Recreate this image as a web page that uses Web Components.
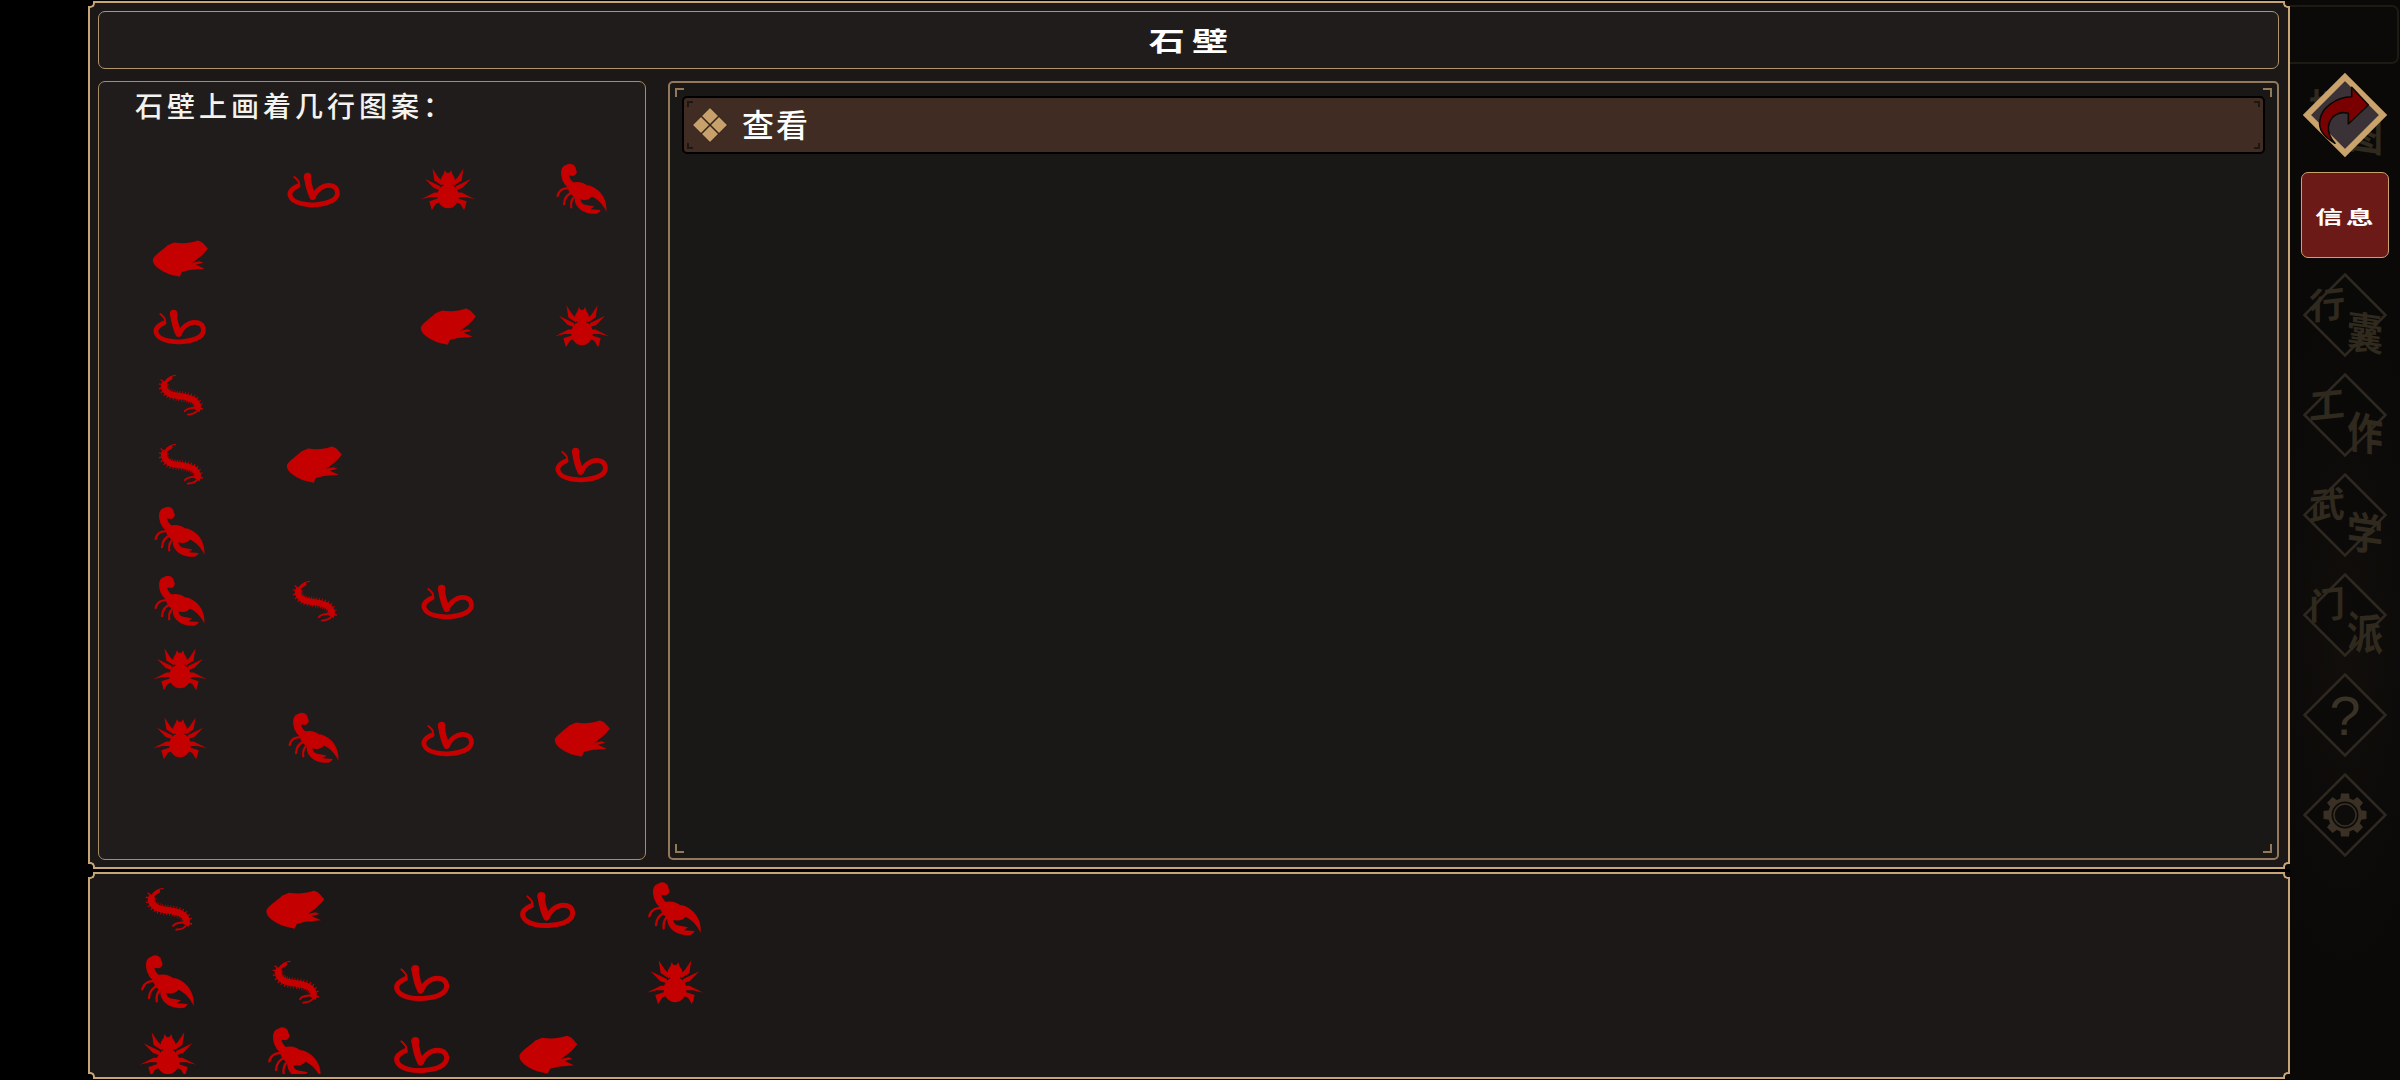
<!DOCTYPE html>
<html lang="zh">
<head>
<meta charset="utf-8">
<title>石壁</title>
<style>
html,body{margin:0;padding:0;background:#000;width:2400px;height:1080px;overflow:hidden}
body{font-family:"Noto Sans CJK SC","Noto Sans",sans-serif;color:#fff}
</style>
</head>
<body>
<stone-app>
  <game-frame style="height:868px;margin-top:1px">
    <title-bar>石壁</title-bar>
    <div style="display:flex;gap:22px;flex:1;min-height:0">
      <mural-panel>
        <span slot="caption">石壁上画着几行图案：</span>
        <glyph-grid cols="4" cell="134" row="68.6" size="76" items="- snake spider scorpion frog - - - snake - frog spider centipede - - - centipede frog - snake scorpion - - - scorpion centipede snake - spider - - - spider scorpion snake frog"></glyph-grid>
      </mural-panel>
      <action-panel>
        <action-row>查看</action-row>
      </action-panel>
    </div>
  </game-frame>
  <game-frame slot="lower" tight style="height:207px;margin-top:3px">
    <glyph-grid style="margin-top:-1px" cols="5" cell="126.7" row="72.5" size="80" items="centipede frog - snake scorpion scorpion centipede snake - spider spider scorpion snake frog -"></glyph-grid>
  </game-frame>
  <side-bar slot="side">
    <side-slot a="地" b="图" kind="back"></side-slot>
    <info-tile>信息</info-tile>
    <side-slot a="行" b="囊"></side-slot>
    <side-slot a="工" b="作"></side-slot>
    <side-slot a="武" b="学"></side-slot>
    <side-slot a="门" b="派"></side-slot>
    <side-slot kind="help"></side-slot>
    <side-slot kind="gear"></side-slot>
  </side-bar>
</stone-app>
<script>
function def(name, html){
  const C = class extends HTMLElement{
    constructor(){super();this.attachShadow({mode:'open'}).innerHTML = typeof html==='function'?html(this):html;}
  };
  customElements.define(name,C);
}
const TAN='#c6a676';

def('stone-app',`<style>
:host{display:flex;width:2400px;height:1080px;background:#000}
.l{width:88px;flex:none;background:#000}
.m{width:2202px;flex:none;display:flex;flex-direction:column}
.s{flex:1;min-width:0}
</style>
<div class="l"></div>
<div class="m"><slot></slot><slot name="lower"></slot></div>
<div class="s"><slot name="side"></slot></div>`);

def('game-frame',`<style>
:host{display:flex;flex-direction:column;box-sizing:border-box;border:2px solid ${TAN};background:#1b1817;padding:8px 9px 7px 8px;gap:12px;position:relative}
:host([tight]){padding:0 0 3px 15px;background:#1b1817}
i{position:absolute;width:7px;height:7px;background:#0a0908;box-sizing:border-box;border:0 solid ${TAN}}
.tl{left:-2px;top:-2px;border-width:0 2px 2px 0;border-bottom-right-radius:5px;background:#000}
.tr{right:-2px;top:-2px;border-width:0 0 2px 2px;border-bottom-left-radius:5px}
.bl{left:-2px;bottom:-2px;border-width:2px 2px 0 0;border-top-right-radius:5px;background:#000}
.br{right:-2px;bottom:-2px;border-width:2px 0 0 2px;border-top-left-radius:5px}
</style><slot></slot><i class="tl"></i><i class="tr"></i><i class="bl"></i><i class="br"></i>`);

def('title-bar',`<style>
:host{display:flex;align-items:center;justify-content:center;flex:none;box-sizing:border-box;height:58px;border:1.5px solid #b0946a;border-radius:7px;background:#1f1c1b;font:700 30px "Noto Sans CJK SC",sans-serif;color:#fff}
span{display:inline-block;letter-spacing:6px;margin-right:-6px;transform:scale(1.2,.88)}
</style><span><slot></slot></span>`);

def('mural-panel',`<style>
:host{display:block;box-sizing:border-box;width:548px;flex:none;border:1.5px solid #a88c62;border-radius:7px;background:#1f1c1b;padding:4px 0 0 14px;overflow:hidden}
.c{height:38px;margin:0 0 31px 22px;font:500 28px/38px "Noto Sans CJK SC",sans-serif;letter-spacing:4px;color:#f4f2ee}
</style><div class="c"><slot name="caption"></slot></div><slot></slot>`);

def('action-panel',`<style>
:host{display:block;box-sizing:border-box;flex:1;min-width:0;border:2px solid #93785a;border-radius:5px;background:#1a1817;padding:13px 12px;position:relative}
i{position:absolute;width:9px;height:9px;box-sizing:border-box;border:0 solid #93785a}
.a{left:5px;top:5px;border-width:2px 0 0 2px}.b{right:5px;top:5px;border-width:2px 2px 0 0}
.c{left:5px;bottom:5px;border-width:0 0 2px 2px}.d{right:5px;bottom:5px;border-width:0 2px 2px 0}
</style><slot></slot><i class="a"></i><i class="b"></i><i class="c"></i><i class="d"></i>`);

def('action-row',`<style>
:host{display:flex;align-items:center;box-sizing:border-box;height:58px;border:2px solid #000;border-radius:5px;background:#402c22;padding-left:8px;gap:14px;position:relative;font:500 32px "Noto Sans CJK SC",sans-serif;letter-spacing:2px;color:#fff}
svg{flex:none;display:block}
span{position:relative;top:-2px}
i{position:absolute;width:6px;height:6px;box-sizing:border-box;border:0 solid #1e1611}
.a{left:3px;top:3px;border-width:2px 0 0 2px}.b{right:3px;top:3px;border-width:2px 2px 0 0}
.c{left:3px;bottom:3px;border-width:0 0 2px 2px}.d{right:3px;bottom:3px;border-width:0 2px 2px 0}
</style>
<svg width="36" height="36" viewBox="-18 -18 36 36"><g fill="#c8a06c" stroke="#120d0a" stroke-width=".8"><path d="M0 -17.5L8.5 -9L0 -.5L-8.5 -9Z"/><path d="M0 17.5L8.5 9L0 .5L-8.5 9Z"/><path d="M-17.5 0L-9 -8.5L-.5 0L-9 8.5Z"/><path d="M17.5 0L9 -8.5L.5 0L9 8.5Z"/></g></svg>
<span><slot></slot></span><i class="a"></i><i class="b"></i><i class="c"></i><i class="d"></i>`);

const R='#c40000';
const SHAPES={
 snake:`<g transform="translate(-116 -100)" fill="none" stroke="${R}" stroke-linecap="round"><path stroke-width="6" d="M54 62C64 72 74 78 66 90"/><path stroke-width="15" d="M66 90C48 98 36 108 41 122C50 147 95 152 125 149C165 146 192 132 190 110C188 90 165 84 146 92C132 98 124 106 118 118"/><path stroke-width="21" d="M95 64C98 84 102 105 112 124"/><circle cx="96" cy="61" r="12" fill="${R}" stroke="none"/></g>`,
 spider:`<g fill="${R}"><g transform="translate(-105 -95)"><ellipse cx="105" cy="118" rx="34" ry="38"/><circle cx="105" cy="66" r="22"/><path d="M88 58L95 36L105 50L115 36L122 58Z"/><path d="M56 30L76 60L92 74L86 84L62 68Z"/><path d="M32 63L80 86L84 100L60 92Z"/><path d="M20 127L62 106L82 106L78 120L50 120Z"/><path d="M54 162L46 134L76 124L84 134L66 142Z"/><path d="M154 30L134 60L118 74L124 84L148 68Z"/><path d="M178 63L130 86L126 100L150 92Z"/><path d="M190 127L148 106L128 106L132 120L160 120Z"/><path d="M156 162L164 134L134 124L126 134L144 142Z"/></g></g>`,
 scorpion:`<g transform="translate(-499 -102)" fill="none" stroke="${R}" stroke-linecap="round"><path stroke-width="24" d="M470 48C455 32 443 34 445 56C447 74 458 88 474 98"/><circle cx="461" cy="41" r="19" fill="${R}" stroke="none"/><ellipse cx="494" cy="108" rx="40" ry="26" transform="rotate(22 494 108)" fill="${R}" stroke="none"/><path fill="${R}" stroke="none" d="M518 90C552 98 580 130 576 174C566 152 548 128 510 118Z"/><path fill="${R}" stroke="none" d="M476 126C472 160 505 184 545 180C551 178 557 172 558 168L526 166L538 157L506 151C496 147 494 138 492 126Z"/><path stroke-width="7" d="M466 100C442 96 426 106 422 124M470 112C452 118 443 134 442 150M482 120C467 130 463 145 465 160M495 125C488 134 486 142 487 150"/></g>`,
 frog:`<g transform="translate(-484 -85)"><path fill="${R}" d="M398 90C403 75 430 60 445 45L466 36C490 40 515 39 540 30C556 33 561 44 572 55C561 71 546 85 522 100L546 95L558 100L534 106L562 119L515 123L490 129L483 144L449 136C424 126 398 111 398 90Z"/></g>`,
 centipede:`<g transform="translate(-97 -85)" fill="none" stroke="${R}" stroke-linecap="round"><path stroke-width="4" d="M82 23C68 25 60 31 55 38"/><path stroke-width="11" d="M68 32C54 38 47 50 49 60"/><path stroke-width="32" stroke-dasharray="2.5 6" stroke-linecap="butt" d="M50 44C40 58 48 72 62 80C82 92 125 86 145 105C154 116 156 124 152 130"/><path stroke-width="20" stroke-linecap="butt" d="M50 46C42 58 48 72 62 80C82 92 125 86 145 105C154 116 156 124 150 134"/><path stroke-width="6" d="M150 126C135 124 118 128 112 136M150 136C142 146 132 146 122 147"/></g>`
};
def('rock-glyph',el=>{
  const t=el.getAttribute('type'),s=+el.getAttribute('size')||80;
  return `<style>:host{display:block;width:${s}px;height:${s}px}svg{display:block;overflow:visible}</style><svg width="${s}" height="${s}" viewBox="-120 -120 240 240">${SHAPES[t]||''}</svg>`;
});

def('glyph-grid',el=>{
  const c=el.getAttribute('cols'),w=el.getAttribute('cell'),r=el.getAttribute('row'),s=el.getAttribute('size');
  const cells=el.getAttribute('items').split(/\s+/).map(t=>`<div>${t==='-'?'':`<rock-glyph type="${t}" size="${s}"></rock-glyph>`}</div>`).join('');
  return `<style>:host{display:grid;grid-template-columns:repeat(${c},${w}px);grid-auto-rows:${r}px;overflow:hidden;flex:1;min-height:0}
  div{display:flex;align-items:center;justify-content:center;min-width:0;min-height:0}</style>${cells}`;
});

def('side-bar',`<style>
:host{display:flex;flex-direction:column;height:1080px;background:radial-gradient(ellipse 120px 420px at 50% 640px,#110e0b,#0a0908 80%);box-sizing:border-box;padding-top:5px}
.top{height:59px;flex:none;box-sizing:border-box;border:2px solid #1e1a14;border-left:0;border-radius:0 7px 7px 0;background:#0b0a09;margin:0 1px 1px 0}
</style><div class="top"></div><slot></slot>`);

def('info-tile',`<style>
:host{display:flex;align-items:center;justify-content:center;box-sizing:border-box;width:88px;height:86px;margin:7px 0 7px 11px;flex:none;background:#6b1a17;border:1.5px solid #c9a26c;border-radius:7px;font:700 26px "Noto Sans CJK SC",sans-serif;color:#fff}
span{display:inline-block;letter-spacing:3px;margin-right:-3px;transform:scale(1.06,.72)}
</style><span><slot></slot></span>`);

def('side-slot',el=>{
  const k=el.getAttribute('kind')||'',a=el.getAttribute('a')||'',b=el.getAttribute('b')||'';
  const back=k==='back';
  const dia=back
   ?`<polygon points="55,17 93,55 55,93 17,55" fill="#3a3236" stroke="#c9a26c" stroke-width="6"/>`
   :`<polygon points="55,14.5 95.5,55 55,95.5 14.5,55" fill="#0a0908" fill-opacity=".55" stroke="#2e2820" stroke-width="2.5"/>`;
  const arrow=back?`<svg class="ov" width="110" height="100" viewBox="0 0 110 100"><path d="M61.7 22.3L78.3 40L58.3 59L58.3 48.3C50 46 40 50 38.3 62C38 68 41 74 45 78.3C34 72 28 64 30 55C31 44 45 32 61.7 31.7Z" fill="#7a0000" stroke="#0c0808" stroke-width="1.6" stroke-linejoin="round"/></svg>`:'';
  let gear='';
  if(k==='gear'){
    let teeth='';for(let i=0;i<8;i++)teeth+=`<path d="M49.5 40L51 28.5H59L60.5 40Z" fill="#3a3024" transform="rotate(${i*45} 55 50)"/>`;
    gear=`<svg class="ov" width="110" height="100" viewBox="0 0 110 100">${teeth}<circle cx="55" cy="50" r="17" fill="#3a3024"/><circle cx="55" cy="50" r="13.5" fill="#0e0c0a"/><circle cx="55" cy="50" r="11" fill="#0e0c0a" stroke="#3a3024" stroke-width="1.5"/></svg>`;
  }
  return `<style>
  :host{display:block;position:relative;height:100px;flex:none}
  svg{position:absolute;left:0;top:0;display:block}
  .d{width:110px;height:110px;top:-5px}
  .ov{width:110px;height:100px}
  b{position:absolute;font:700 36px/40px "Noto Sans CJK SC",sans-serif;color:#30291e;width:40px;text-align:center}
  .a{left:17px;top:17px;transform:skewY(-6deg)}
  .b{left:55px;top:45px;transform:skewY(8deg) scale(1,1.22)}
  .q{position:absolute;left:0;top:0;width:110px;height:100px;display:flex;align-items:center;justify-content:center;font:400 56px "Liberation Sans",sans-serif;color:#3a3226}
  </style>
  ${a&&back?`<b class="a">${a}</b><b class="b">${b}</b>`:''}
  <svg class="d" viewBox="0 0 110 110">${dia}</svg>
  ${a&&!back?`<b class="a">${a}</b><b class="b">${b}</b>`:''}
  ${arrow}${gear}
  ${k==='help'?'<div class="q">?</div>':''}`;
});
</script>
</body>
</html>
